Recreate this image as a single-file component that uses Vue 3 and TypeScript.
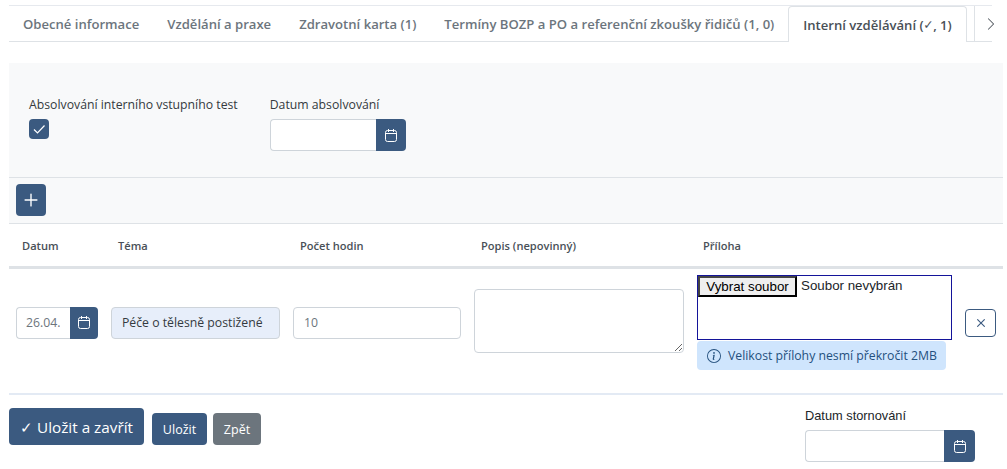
<script setup lang="ts">
const tabs: string[] = [
  'Obecné informace',
  'Vzdělání a praxe',
  'Zdravotní karta (1)',
  'Termíny BOZP a PO a referenční zkoušky řidičů (1, 0)',
]
</script>

<template>
  <div class="page">
    <nav class="tabs">
      <a v-for="t in tabs" :key="t" class="tab">{{ t }}</a>
      <a class="tab active">Interní vzdělávání (<span class="thin">✓</span>, 1)</a>
      <a class="tab more">
        <svg width="14" height="14" viewBox="0 0 16 16" fill="currentColor">
          <path fill-rule="evenodd" d="M4.646 1.646a.5.5 0 0 1 .708 0l6 6a.5.5 0 0 1 0 .708l-6 6a.5.5 0 0 1-.708-.708L10.293 8 4.646 2.354a.5.5 0 0 1 0-.708z" />
        </svg>
      </a>
    </nav>

    <section class="panel">
      <div class="panel-top">
        <div class="check-field">
          <label class="lbl">Absolvování interního vstupního test</label>
          <span class="checkbox">
            <svg width="20" height="20" viewBox="0 0 20 20" fill="none" stroke="#fff" stroke-width="1.2">
              <path d="M5 10.500l3.500 3.500 7-7.500" />
            </svg>
          </span>
        </div>
        <div class="date-field">
          <label class="lbl">Datum absolvování</label>
          <div class="group">
            <input class="input w105" type="text" />
            <button class="cal">
              <svg class="cal-icon" width="14" height="15" viewBox="0 0 14 15" fill="none" stroke="currentColor" stroke-width="1">
                <rect x="1.500" y="2.500" width="11" height="11" rx="2" />
                <path d="M1.500 5.500h11M4.500 1v3M9.500 1v3" />
              </svg>
            </button>
          </div>
        </div>
      </div>
      <div class="panel-bar">
        <button class="add">
          <svg width="22" height="22" viewBox="0 0 16 16" fill="currentColor">
            <path d="M8 3.200a.5.5 0 0 1 .5.5v3.800h3.800a.5.5 0 0 1 0 1H8.500v3.800a.5.5 0 0 1-1 0V8.500H3.700a.5.5 0 0 1 0-1h3.800V3.700a.5.5 0 0 1 .5-.5z" />
          </svg>
        </button>
      </div>
    </section>

    <div class="grid head">
      <div>Datum</div>
      <div>Téma</div>
      <div>Počet hodin</div>
      <div>Popis (nepovinný)</div>
      <div>Příloha</div>
      <div></div>
    </div>

    <div class="grid row">
      <div class="group">
        <input class="input w55" type="text" value="26.04.2023" />
        <button class="cal small">
          <svg class="cal-icon" width="14" height="15" viewBox="0 0 14 15" fill="none" stroke="currentColor" stroke-width="1">
            <rect x="1.500" y="2.500" width="11" height="11" rx="2" />
            <path d="M1.500 5.500h11M4.500 1v3M9.500 1v3" />
          </svg>
        </button>
      </div>
      <div class="topic">Péče o tělesně postižené</div>
      <input class="input hours" type="text" value="10" />
      <textarea class="area"></textarea>
      <div class="attach">
        <div class="file">
          <button class="file-btn">Vybrat soubor</button>
          <span class="file-name">Soubor nevybrán</span>
        </div>
        <div class="alert">
          <svg width="14" height="14" viewBox="0 0 16 16" fill="currentColor">
            <path d="M8 15A7 7 0 1 1 8 1a7 7 0 0 1 0 14zm0 1A8 8 0 1 0 8 0a8 8 0 0 0 0 16z" />
            <path d="m8.930 6.588-2.290.287-.082.380.450.083c.294.070.352.176.288.469l-.738 3.468c-.194.897.105 1.319.808 1.319.545 0 1.178-.252 1.465-.598l.088-.416c-.200.176-.492.246-.686.246-.275 0-.375-.193-.304-.533L8.930 6.588zM9 4.500a1 1 0 1 1-2 0 1 1 0 0 1 2 0z" />
          </svg>
          <span>Velikost přílohy nesmí překročit 2MB</span>
        </div>
      </div>
      <button class="remove">
        <svg width="18" height="18" viewBox="0 0 16 16" fill="currentColor">
          <path d="M4.646 4.646a.5.5 0 0 1 .708 0L8 7.293l2.646-2.647a.5.5 0 0 1 .708.708L8.707 8l2.647 2.646a.5.5 0 0 1-.708.708L8 8.707l-2.646 2.647a.5.5 0 0 1-.708-.708L7.293 8 4.646 5.354a.5.5 0 0 1 0-.708z" />
        </svg>
      </button>
    </div>

    <footer class="foot">
      <div class="actions">
        <button class="btn big">✓ Uložit a zavřít</button>
        <button class="btn">Uložit</button>
        <button class="btn grey">Zpět</button>
      </div>
      <div class="storno">
        <label class="storno-lbl">Datum stornování</label>
        <div class="group">
          <input class="input w139" type="text" />
          <button class="cal wide">
            <svg class="cal-icon" width="14" height="15" viewBox="0 0 14 15" fill="none" stroke="currentColor" stroke-width="1">
              <rect x="1.500" y="2.500" width="11" height="11" rx="2" />
              <path d="M1.500 5.500h11M4.500 1v3M9.500 1v3" />
            </svg>
          </button>
        </div>
      </div>
    </footer>
  </div>
</template>

<style scoped>
.page {
  width: 1007px;
  height: 469px;
  overflow: hidden;
  box-sizing: border-box;
  padding: 5px 4px 0 9px;
  font-family: "Open Sans", "Noto Sans", sans-serif;
  font-size: 12.25px;
  color: #212529;
  background: #fff;
}
.tabs {
  display: flex;
  width: 983px;
  height: 37px;
  box-sizing: border-box;
  border-top: 1px solid #e6e9ee;
  border-bottom: 1px solid #dee2e6;
}
.tab {
  padding: 0 14px;
  display: flex;
  align-items: center;
  font-size: 13.1px;
  font-weight: 600;
  color: #6c757d;
  white-space: nowrap;
}
.thin {
  font-family: "DejaVu Sans", sans-serif;
  font-weight: 400;
  font-size: 12.5px;
  margin: 0 -0.5px;
}
.tab.active {
  color: #495057;
  height: 36px;
  box-sizing: border-box;
  background: #fff;
  border: 1px solid #dee2e6;
  border-bottom: 0;
  border-radius: 4px 4px 0 0;
}
.tab.more {
  margin-left: 7px;
  padding: 0 0 0 9px;
  color: #495057;
  border-left: 1px solid #dee2e6;
}
.panel {
  margin-top: 21px;
  width: 994px;
  background: #f8f9fa;
}
.panel-top {
  height: 115px;
  box-sizing: border-box;
  padding: 33px 0 0 20px;
  display: flex;
  gap: 32px;
  border-bottom: 1px solid #dee2e6;
}
.lbl {
  display: block;
  line-height: 17px;
  color: #343a40;
  white-space: nowrap;
}
.check-field .lbl {
  margin-bottom: 6px;
}
.date-field .lbl {
  margin-bottom: 6px;
}
.checkbox {
  display: flex;
  width: 20px;
  height: 20px;
  border-radius: 4px;
  background: #3b5a80;
}
.group {
  display: flex;
}
.input {
  box-sizing: border-box;
  height: 32px;
  padding: 0 10px;
  border: 1px solid #ced4da;
  border-radius: 4px;
  background: #fff;
  font: inherit;
  color: #6c757d;
  outline: none;
}
.group .input {
  border-radius: 4px 0 0 4px;
  border-right: 0;
}
.w105 {
  width: 106px;
}
.group .w55 {
  width: 54px;
  padding: 0 10px 0 9px;
}
.w139 {
  width: 139px;
}
.cal {
  display: flex;
  align-items: center;
  justify-content: center;
  width: 30px;
  height: 32px;
  padding: 0;
  border: 0;
  border-radius: 0 4px 4px 0;
  background: #3b5a80;
  color: #fff;
}
.cal.small {
  width: 28px;
}
.cal.wide {
  width: 31px;
}
.panel-bar {
  height: 46px;
  box-sizing: border-box;
  padding: 6px 0 0 7px;
  border-bottom: 1px solid #dee2e6;
}
.add {
  display: flex;
  align-items: center;
  justify-content: center;
  width: 30px;
  height: 32px;
  padding: 0;
  border: 0;
  border-radius: 4px;
  background: #3b5a80;
  color: #fff;
}
.grid {
  display: grid;
  grid-template-columns: 95px 182px 181px 223px 268px 1fr;
  width: 994px;
  box-sizing: border-box;
  padding-left: 7px;
}
.head {
  height: 45px;
  align-items: center;
  border-bottom: 3px solid #dee2e6;
  font-size: 11.100px;
  font-weight: 600;
  color: #495057;
}
.head > div {
  padding-left: 7px;
}
.head > div:first-child,
.head > div:nth-child(5) {
  padding-left: 6px;
}
.row {
  height: 126px;
  box-sizing: border-box;
  padding-top: 6px;
  padding-bottom: 23px;
  align-items: center;
  border-bottom: 2px solid #e3eaf4;
}
.topic {
  box-sizing: border-box;
  width: 169px;
  height: 32px;
  line-height: 30px;
  padding-left: 10px;
  border: 1px solid #ced4da;
  border-radius: 4px;
  background: #e7eefa;
  color: #343a40;
  white-space: nowrap;
}
.hours {
  width: 168px;
}
.area {
  box-sizing: border-box;
  width: 210px;
  height: 64px;
  margin-bottom: 3px;
  border: 1px solid #ced4da;
  border-radius: 4px;
  background: #fff;
  outline: none;
}
.attach {
  display: flex;
  flex-direction: column;
  gap: 1px;
}
.file {
  box-sizing: border-box;
  width: 255px;
  height: 65px;
  border: 1px solid #14149a;
  display: flex;
  align-items: flex-start;
  font-family: "Liberation Sans", Arial, sans-serif;
  font-size: 13.333px;
  color: #212529;
}
.file-btn {
  box-sizing: border-box;
  width: 99px;
  height: 21px;
  padding: 0;
  margin: 0;
  border: 2px solid;
  border-color: #444 #000 #000 #444;
  background: #efefef;
  font: inherit;
  color: #000;
}
.file-name {
  margin-left: 4px;
  line-height: 20px;
}
.alert {
  box-sizing: border-box;
  width: 249px;
  height: 29px;
  padding-left: 10px;
  display: flex;
  align-items: center;
  gap: 7px;
  border-radius: 4px;
  background: #cfe5fd;
  color: #24507e;
  white-space: nowrap;
}
.remove {
  display: flex;
  align-items: center;
  justify-content: center;
  box-sizing: border-box;
  width: 31px;
  height: 28px;
  padding: 0;
  border: 1px solid #3b5a80;
  border-radius: 4px;
  background: #fff;
  color: #3b5a80;
}
.foot {
  display: flex;
  justify-content: space-between;
  width: 966px;
  padding-top: 13px;
}
.actions {
  display: flex;
  align-items: flex-end;
  gap: 8px;
  height: 37px;
}
.btn {
  box-sizing: border-box;
  height: 32px;
  width: 55px;
  padding: 0;
  border: 0;
  border-radius: 4px;
  background: #3b5a80;
  color: #fff;
  font: inherit;
  font-size: 12.500px;
}
.btn.big {
  width: 135px;
  height: 37px;
  font-size: 15.300px;
  font-weight: 500;
}
.btn.grey {
  width: 48px;
  margin-left: -2px;
  background: #6c757d;
}
.storno {
  margin-top: 1px;
}
.storno-lbl {
  display: block;
  font-family: "Liberation Sans", Arial, sans-serif;
  font-size: 12.800px;
  line-height: 14px;
  margin-bottom: 7px;
  color: #212529;
}
</style>
